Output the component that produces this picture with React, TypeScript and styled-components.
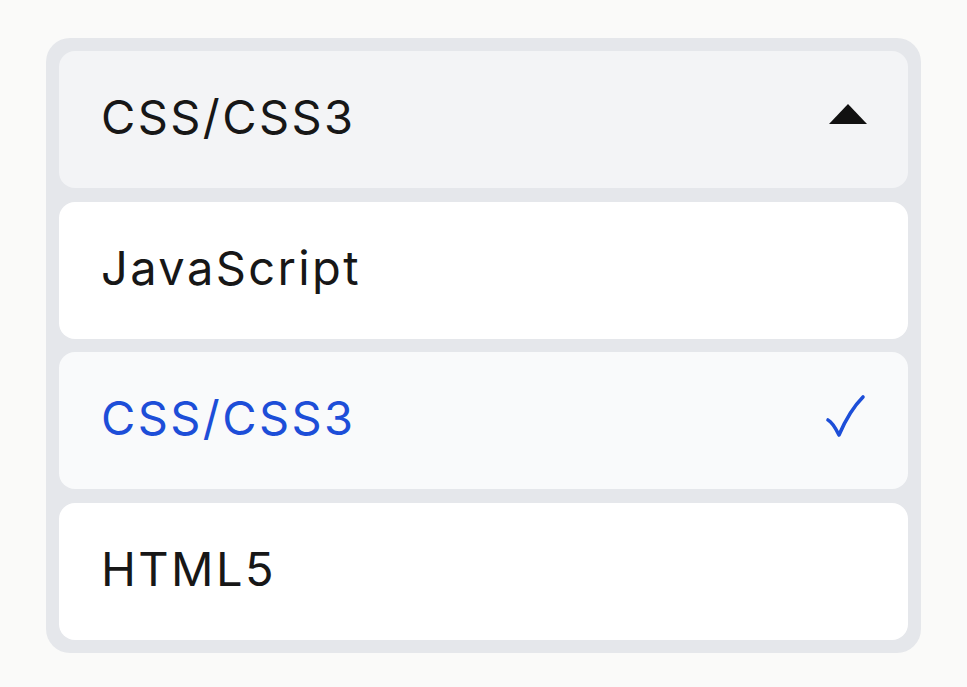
import React from "react";
import styled, { createGlobalStyle } from "styled-components";

const Global = createGlobalStyle`
  html, body { margin: 0; padding: 0; background: #fafaf9; }
  body { font-family: Inter, "Liberation Sans", sans-serif; }
`;

const Page = styled.div`
  padding: 38px 46px;
  box-sizing: border-box;
  width: 967px;
  height: 687px;
`;

const Panel = styled.div`
  background: #e5e7eb;
  border-radius: 24px;
  padding: 13px;
  display: flex;
  flex-direction: column;
  gap: 13.5px;
  width: 875px;
  box-sizing: border-box;
`;

const Row = styled.div<{ $variant: "header" | "plain" | "selected" }>`
  height: 137px;
  box-sizing: border-box;
  border-radius: 16px;
  padding: 0 41px 0 42px;
  display: flex;
  align-items: center;
  justify-content: space-between;
  background: ${(p) =>
    p.$variant === "header" ? "#f3f4f6" : p.$variant === "selected" ? "#f9fafb" : "#ffffff"};
  color: ${(p) => (p.$variant === "selected" ? "#1d4ed8" : "#171717")};
  font-size: 47px;
  letter-spacing: 2.4px;
`;

const Label = styled.span`
  line-height: 1;
  margin-top: -6px;
`;

const Caret = styled.span`
  width: 0;
  height: 0;
  border-left: 19.5px solid transparent;
  border-right: 19.5px solid transparent;
  border-bottom: 20px solid #111111;
  margin-top: -12px;
`;

const Check = styled.svg`
  width: 40px;
  height: 44px;
  margin-top: -8px;
  margin-right: 2px;
  overflow: visible;
`;

export default function App() {
  return (
    <>
      <Global />
      <Page>
        <Panel>
          <Row $variant="header">
            <Label>CSS/CSS3</Label>
            <Caret />
          </Row>
          <Row $variant="plain">
            <Label>JavaScript</Label>
          </Row>
          <Row $variant="selected">
            <Label>CSS/CSS3</Label>
            <Check viewBox="0 0 40 44">
              <path
                d="M3 25 C7 27 10 32 14 40 C20 26 27 13 38 2"
                fill="none"
                stroke="#1d4ed8"
                strokeWidth="3.6"
                strokeLinecap="round"
                strokeLinejoin="round"
              />
            </Check>
          </Row>
          <Row $variant="plain">
            <Label>HTML5</Label>
          </Row>
        </Panel>
      </Page>
    </>
  );
}
